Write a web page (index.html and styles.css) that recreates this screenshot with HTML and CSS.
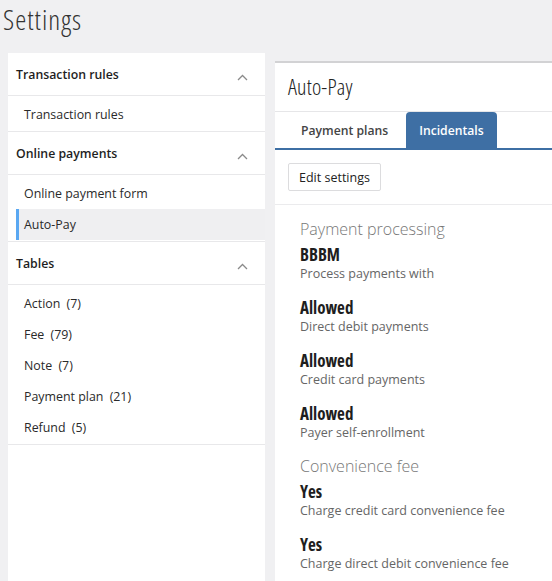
FILE: index.html
```html
<!DOCTYPE html>
<html lang="en">
<head>
<meta charset="utf-8">
<title>Settings</title>
<link rel="stylesheet" href="styles.css">
</head>
<body>
<h1 class="page-title">Settings</h1>
<div class="layout">
  <nav class="sidebar">
    <div class="group">
      <div class="group-header"><span>Transaction rules</span><svg class="chev" width="11" height="7" viewBox="0 0 11 7"><polyline points="1,6 5.5,1.5 10,6" fill="none" stroke="#8a8a8a" stroke-width="1.3"/></svg></div>
      <ul class="group-list">
        <li class="item">Transaction rules</li>
      </ul>
    </div>
    <div class="group">
      <div class="group-header"><span>Online payments</span><svg class="chev" width="11" height="7" viewBox="0 0 11 7"><polyline points="1,6 5.5,1.5 10,6" fill="none" stroke="#8a8a8a" stroke-width="1.3"/></svg></div>
      <ul class="group-list">
        <li class="item">Online payment form</li>
        <li class="item selected">Auto-Pay</li>
      </ul>
    </div>
    <div class="group">
      <div class="group-header"><span>Tables</span><svg class="chev" width="11" height="7" viewBox="0 0 11 7"><polyline points="1,6 5.5,1.5 10,6" fill="none" stroke="#8a8a8a" stroke-width="1.3"/></svg></div>
      <ul class="group-list">
        <li class="item">Action <span class="count">(7)</span></li>
        <li class="item">Fee <span class="count">(79)</span></li>
        <li class="item">Note <span class="count">(7)</span></li>
        <li class="item">Payment plan <span class="count">(21)</span></li>
        <li class="item">Refund <span class="count">(5)</span></li>
      </ul>
    </div>
  </nav>
  <main class="main">
    <h2 class="main-title">Auto-Pay</h2>
    <div class="tabs">
      <div class="tab">Payment plans</div>
      <div class="tab active">Incidentals</div>
    </div>
    <div class="toolbar">
      <button class="btn">Edit settings</button>
    </div>
    <div class="content">
      <section class="section">
        <h3 class="section-title">Payment processing</h3>
        <div class="field"><div class="value">BBBM</div><div class="label">Process payments with</div></div>
        <div class="field"><div class="value">Allowed</div><div class="label">Direct debit payments</div></div>
        <div class="field"><div class="value">Allowed</div><div class="label">Credit card payments</div></div>
        <div class="field"><div class="value">Allowed</div><div class="label">Payer self-enrollment</div></div>
      </section>
      <section class="section">
        <h3 class="section-title">Convenience fee</h3>
        <div class="field"><div class="value">Yes</div><div class="label">Charge credit card convenience fee</div></div>
        <div class="field"><div class="value">Yes</div><div class="label">Charge direct debit convenience fee</div></div>
      </section>
    </div>
  </main>
</div>
</body>
</html>
```
FILE: styles.css
```css
html, body {
  margin: 0;
  padding: 0;
}
body {
  background: #f0f0f2;
  font-family: "Open Sans", "Liberation Sans", sans-serif;
  color: #333;
  height: 581px;
  overflow: hidden;
}
.page-title {
  margin: 0;
  height: 53px;
  padding-left: 3px;
  font-size: 28px;
  line-height: normal;
  letter-spacing: 1px;
  font-weight: 300;
  font-stretch: 75%;
  color: #333;
}
.layout {
  display: flex;
  gap: 10px;
  padding-left: 8px;
  align-items: flex-start;
}
.sidebar {
  width: 257px;
  flex: none;
  background: #fff;
  min-height: 528px;
}
.group-header {
  height: 42px;
  display: flex;
  align-items: center;
  justify-content: space-between;
  padding: 0 17px 0 8px;
  font-size: 12.3px;
  font-weight: 600;
  color: #1e1e1e;
  border-bottom: 1px solid #e8e8ea;
}
.chev {
  margin-top: 6px;
}
.group-list {
  list-style: none;
  margin: 0;
  padding: 3px 0 1px;
  border-bottom: 1px solid #e8e8ea;
}
.item {
  height: 31px;
  line-height: 31px;
  padding-left: 8px;
  margin-left: 8px;
  font-size: 12.4px;
  color: #2a2a2a;
}
.item.selected {
  background: #efeff1;
  border-left: 3px solid #5aa8f2;
  padding-left: 5px;
}
.count {
  margin-left: 3px;
}
.main {
  flex: 1;
  margin-top: 8px;
  background: #fff;
  border-top: 2px solid #d2d2d4;
  min-height: 518px;
}
.main-title {
  margin: 0;
  height: 48px;
  line-height: 46px;
  padding-left: 13px;
  font-size: 22px;
  letter-spacing: 0.2px;
  font-weight: 300;
  font-stretch: 75%;
  color: #222;
  border-bottom: 1px solid #e6e6e8;
}
.tabs {
  display: flex;
  gap: 5px;
  padding-left: 13px;
  height: 36px;
  border-bottom: 2px solid #3e6fa4;
}
.tab {
  padding: 0 13px;
  line-height: 37px;
  font-size: 12.2px;
  font-weight: 600;
  color: #444;
  border-radius: 4px 4px 0 0;
}
.tab.active {
  background: #3e6fa4;
  color: #fff;
}
.toolbar {
  padding: 13px;
  border-bottom: 1px solid #ebebed;
}
.btn {
  height: 28px;
  padding: 0 10px;
  background: #fff;
  border: 1px solid #dcdcde;
  border-radius: 2px;
  font-family: inherit;
  font-size: 12.5px;
  font-weight: 500;
  color: #222;
}
.content {
  padding: 13px 25px 0;
}
.section-title {
  margin: 0 0 5px;
  font-size: 16px;
  line-height: 22px;
  font-weight: 300;
  color: #777;
}
.field {
  margin-bottom: 15px;
}
.section .field:last-child {
  margin-bottom: 13px;
}
.value {
  font-size: 17px;
  line-height: 20px;
  font-weight: 700;
  font-stretch: 75%;
  color: #1e1e1e;
}
.label {
  font-size: 12.5px;
  line-height: 18px;
  color: #666;
}
```
